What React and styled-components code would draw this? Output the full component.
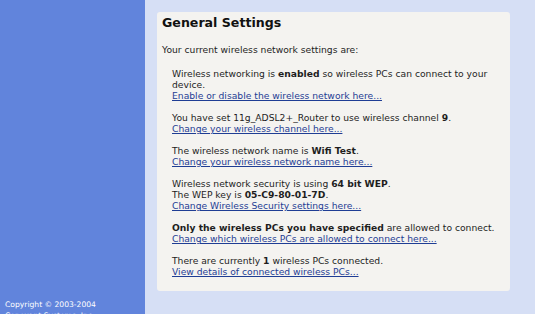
import React from "react";
import styled, { createGlobalStyle } from "styled-components";

const GlobalStyle = createGlobalStyle`
  html, body {
    margin: 0;
    padding: 0;
    overflow: hidden;
  }
  body {
    font-family: "DejaVu Sans", Verdana, sans-serif;
    font-size: 9.2px;
    color: #1e1e1e;
    background: #d6dff5;
  }
`;

const Page = styled.div`
  display: flex;
  height: 314px;
  overflow: hidden;
`;

const Sidebar = styled.div`
  width: 145px;
  flex-shrink: 0;
  background: #6184dc;
  color: #fff;
  padding: 299px 0 0 5px;
  box-sizing: border-box;
  font-size: 7.6px;
  line-height: 11px;
`;

const Main = styled.div`
  flex: 1;
  padding: 12px 25px 0 12px;
`;

const Card = styled.div`
  background: #f4f3f0;
  border-radius: 3px;
  height: 279px;
  box-sizing: border-box;
  padding: 3px 5px 0 5px;
`;

const Title = styled.h1`
  margin: 0 0 13px;
  font-size: 12.6px;
  line-height: 16px;
  font-weight: bold;
  color: #111;
`;

const Intro = styled.p`
  margin: 0 0 13px;
  line-height: 11px;
`;

const Item = styled.div`
  margin: 0 0 10.5px 10px;
  line-height: 11.2px;
`;

const Link = styled.a`
  color: #1f3d94;
  text-decoration: underline;
  cursor: pointer;
`;

const items = [
  {
    text: (
      <>
        Wireless networking is <b>enabled</b> so wireless PCs can connect to your
        <br />
        device.
      </>
    ),
    link: "Enable or disable the wireless network here...",
  },
  {
    text: (
      <>
        You have set 11g_ADSL2+_Router to use wireless channel <b>9</b>.
      </>
    ),
    link: "Change your wireless channel here...",
  },
  {
    text: (
      <>
        The wireless network name is <b>Wifi Test</b>.
      </>
    ),
    link: "Change your wireless network name here...",
  },
  {
    text: (
      <>
        Wireless network security is using <b>64 bit WEP</b>.
        <br />
        The WEP key is <b>05-C9-80-01-7D</b>.
      </>
    ),
    link: "Change Wireless Security settings here...",
  },
  {
    text: (
      <>
        <b>Only the wireless PCs you have specified</b> are allowed to connect.
      </>
    ),
    link: "Change which wireless PCs are allowed to connect here...",
  },
  {
    text: (
      <>
        There are currently <b>1</b> wireless PCs connected.
      </>
    ),
    link: "View details of connected wireless PCs...",
  },
];

export default function App() {
  return (
    <>
      <GlobalStyle />
      <Page>
        <Sidebar>
          Copyright © 2003-2004
          <br />
          Conexant Systems, Inc.
        </Sidebar>
        <Main>
          <Card>
            <Title>General Settings</Title>
            <Intro>Your current wireless network settings are:</Intro>
            {items.map((it, i) => (
              <Item key={i}>
                {it.text}
                <br />
                <Link>{it.link}</Link>
              </Item>
            ))}
          </Card>
        </Main>
      </Page>
    </>
  );
}
